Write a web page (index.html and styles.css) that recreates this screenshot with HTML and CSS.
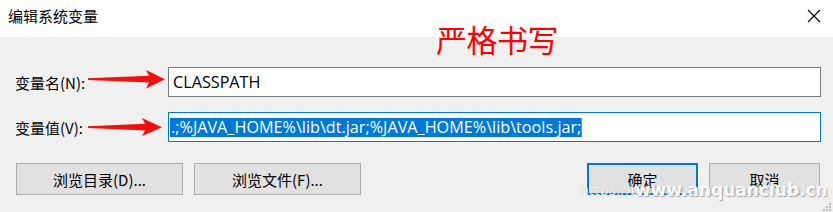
FILE: index.html
```html
<!DOCTYPE html>
<html lang="zh-CN">
<head>
<meta charset="utf-8">
<title>编辑系统变量</title>
<link rel="stylesheet" href="styles.css">
</head>
<body>
<div class="dialog">
  <div class="titlebar">
    <span class="title">编辑系统变量</span>
    <svg class="close" width="14" height="14" viewBox="0 0 14 14"><path d="M1 1 L13 13 M13 1 L1 13" stroke="#000" stroke-width="1.1" fill="none"/></svg>
  </div>
  <div class="content">
    <div class="form">
      <label class="label">变量名(N):</label>
      <div class="field"><span class="value">CLASSPATH</span></div>
      <label class="label">变量值(V):</label>
      <div class="field focused"><span class="sel">.;%JAVA_HOME%\lib\dt.jar;%JAVA_HOME%\lib\tools.jar;</span><span class="caret"></span></div>
    </div>
    <div class="buttons">
      <button class="btn wide">浏览目录(D)...</button>
      <button class="btn wide">浏览文件(F)...</button>
      <span class="spacer"></span>
      <button class="btn narrow default">确定</button>
      <button class="btn narrow">取消</button>
    </div>
  </div>
  <div class="note">严格书写</div>
  <svg class="arrows" width="833" height="212" viewBox="0 0 833 212">
    <polygon points="88,78.2 149,75.8 146,70 165,79.3 146,88.5 149,82.6 88,80" fill="#f01010"/>
    <polygon points="88,126.2 145,123.8 142,118 162,127.3 142,136 145,130.6 88,128" fill="#f01010"/>
  </svg>
  <div class="watermark">
    <span class="wm1">https://blog.csdn.net/qq_40542120</span>
    <span class="wm2">www.anquanclub.cn</span>
  </div>
  <svg class="grip" width="10" height="10" viewBox="0 0 10 10">
    <rect x="7" y="1" width="2" height="2" fill="#bcbcbc"/>
    <rect x="4" y="4" width="2" height="2" fill="#bcbcbc"/>
    <rect x="7" y="4" width="2" height="2" fill="#bcbcbc"/>
    <rect x="1" y="7" width="2" height="2" fill="#bcbcbc"/>
    <rect x="4" y="7" width="2" height="2" fill="#bcbcbc"/>
    <rect x="7" y="7" width="2" height="2" fill="#bcbcbc"/>
  </svg>
</div>
</body>
</html>
```
FILE: styles.css
```css
* { box-sizing: border-box; }
html, body { margin: 0; padding: 0; }
body {
  width: 833px;
  height: 212px;
  overflow: hidden;
  background: #f0f0f0;
  font-family: "Open Sans", "Noto Sans CJK SC", sans-serif;
  font-size: 15px;
  color: #000;
}
.dialog {
  position: relative;
  width: 833px;
  height: 212px;
}
.titlebar {
  height: 37px;
  background: #fff;
  display: flex;
  align-items: center;
  padding: 0 12px 6px 8px;
  justify-content: space-between;
}
.title {
  font-family: "Noto Sans CJK SC", sans-serif;
  font-size: 15px;
  line-height: 20px;
}
.close { display: block; margin-top: 0; }
.content {
  padding-top: 30px;
}
.form {
  display: grid;
  grid-template-columns: 153px 653px;
  row-gap: 15px;
  padding-left: 15px;
  align-items: center;
}
.label {
  font-family: "Noto Sans CJK SC", sans-serif;
  font-size: 15px;
  line-height: 20px;
  padding-top: 1px;
}
.field {
  height: 30px;
  background: #fff;
  border: 1px solid #7a7a7a;
  display: flex;
  align-items: center;
  padding-left: 4px;
  font-size: 16.2px;
  white-space: nowrap;
  overflow: hidden;
}
.field.focused {
  border-color: #0078d7;
  padding-left: 1px;
}
.sel {
  background: #0078d7;
  color: #fff;
  line-height: 19px;
  height: 19px;
  display: inline-block;
  padding-left: 1px;
}
.caret {
  display: inline-block;
  width: 1px;
  height: 19px;
  background: #e07020;
}
.buttons {
  display: flex;
  gap: 11px;
  padding: 0 13px 0 16px;
  margin-top: 21px;
}
.spacer { flex: 1; }
.btn {
  height: 32px;
  background: #e1e1e1;
  border: 1px solid #adadad;
  font-family: "Noto Sans CJK SC", sans-serif;
  font-size: 15px;
  color: #000;
  padding: 0;
  margin: 0;
  border-radius: 0;
}
.btn.wide { width: 167px; }
.btn.narrow { width: 111px; }
.btn.default { border: 2px solid #0078d7; }
.note {
  position: absolute;
  left: 436px;
  top: 19px;
  font-family: "Noto Sans CJK SC", sans-serif;
  font-size: 31px;
  line-height: 40px;
  color: #ff0000;
  letter-spacing: -0.5px;
}
.arrows {
  position: absolute;
  left: 0;
  top: 0;
  pointer-events: none;
}
.watermark {
  position: absolute;
  left: 578px;
  top: 178px;
  width: 250px;
  height: 24px;
  font-family: "DejaVu Sans", sans-serif;
  pointer-events: none;
}
.wm1 {
  position: absolute;
  left: 2px;
  top: 4px;
  font-size: 14px;
  color: rgba(255,255,255,0.85);
  text-shadow: 0 0 1px rgba(120,120,120,0.5);
  letter-spacing: 0;
  white-space: nowrap;
}
.wm2 {
  position: absolute;
  left: 57px;
  top: 2px;
  font-size: 17px;
  font-weight: bold;
  color: rgba(255,255,255,0.95);
  text-shadow: 1px 1px 1px rgba(90,90,90,0.5);
  white-space: nowrap;
}
.grip {
  position: absolute;
  right: 1px;
  bottom: 0;
}
```
